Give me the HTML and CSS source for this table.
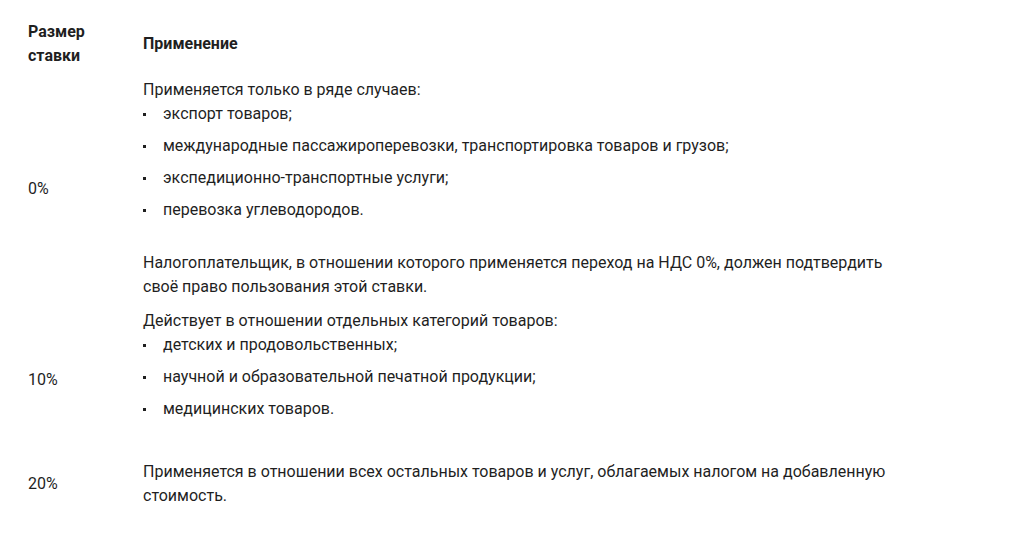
FILE: index.html
```html
<!DOCTYPE html>
<html lang="ru">
<head>
<meta charset="utf-8">
<title>Ставки НДС</title>
<link rel="stylesheet" href="styles.css">
</head>
<body>
<div class="wrap">
  <table class="rates">
    <thead>
      <tr>
        <th class="col-rate">Размер ставки</th>
        <th class="col-use">Применение</th>
      </tr>
    </thead>
    <tbody>
      <tr>
        <td class="col-rate">0%</td>
        <td class="col-use">
          <p class="txt">Применяется только в ряде случаев:</p>
          <ul class="list">
            <li>экспорт товаров;</li>
            <li>международные пассажироперевозки, транспортировка товаров и грузов;</li>
            <li>экспедиционно-транспортные услуги;</li>
            <li>перевозка углеводородов.</li>
          </ul>
          <p class="txt">Налогоплательщик, в отношении которого применяется переход на НДС 0%, должен подтвердить своё право пользования этой ставки.</p>
        </td>
      </tr>
      <tr>
        <td class="col-rate">10%</td>
        <td class="col-use">
          <p class="txt">Действует в отношении отдельных категорий товаров:</p>
          <ul class="list">
            <li>детских и продовольственных;</li>
            <li>научной и образовательной печатной продукции;</li>
            <li>медицинских товаров.</li>
          </ul>
        </td>
      </tr>
      <tr>
        <td class="col-rate">20%</td>
        <td class="col-use">
          <p class="txt">Применяется в отношении всех остальных товаров и услуг, облагаемых налогом на добавленную стоимость.</p>
        </td>
      </tr>
    </tbody>
  </table>
</div>
</body>
</html>
```

FILE: styles.css
```css
html, body {
  margin: 0;
  padding: 0;
  background: #ffffff;
}

body {
  font-family: Roboto, "Liberation Sans", Arial, sans-serif;
  font-size: 16px;
  line-height: 24px;
  color: #1f1f1f;
}

.wrap {
  padding: 15px 0 0 28px;
}

.rates {
  border-collapse: collapse;
  border-spacing: 0;
}

.rates th,
.rates td {
  padding: 5px 0;
  text-align: left;
  vertical-align: middle;
}

.rates th {
  font-weight: 700;
}

.col-rate {
  width: 115px;
  box-sizing: border-box;
  padding-right: 20px !important;
}

.col-use {
  width: 760px;
}

.txt {
  margin: 0;
}

.list {
  list-style: none;
  margin: 0 0 29px;
  padding: 0;
}

.list li {
  display: flex;
  align-items: flex-start;
  margin-bottom: 8px;
}

.list li:last-child {
  margin-bottom: 0;
}

.list li::before {
  content: "";
  flex: none;
  width: 3px;
  height: 3px;
  margin: 11px 17px 0 0;
  background: #1f1f1f;
}
```
